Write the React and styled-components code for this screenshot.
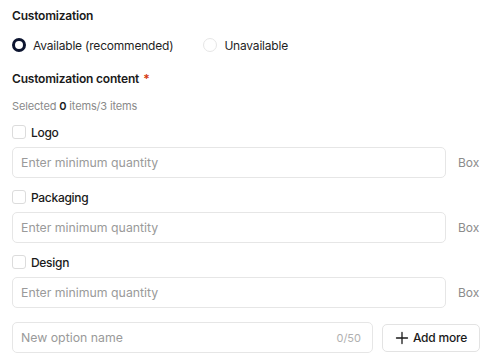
import React from "react";
import styled, { createGlobalStyle } from "styled-components";

const Global = createGlobalStyle`
  html, body { margin: 0; padding: 0; background: #fff; }
  body { font-family: Inter, "Noto Sans", sans-serif; color: #1f1f1f; -webkit-font-smoothing: antialiased; }
  * { box-sizing: border-box; }
`;

const Page = styled.div`
  padding: 7px 20px 0 12px;
  width: 500px;
  display: flex;
  flex-direction: column;
`;

const Title = styled.div`
  font-size: 12px;
  font-weight: 600;
  letter-spacing: -0.2px;
  line-height: 18px;
  color: #1a1a1a;
  margin-top: ${(p) => p.$mt || 0}px;
`;

const Star = styled.span`
  color: #d4380d;
  margin-left: 4px;
`;

const RadioRow = styled.div`
  display: flex;
  align-items: center;
  gap: 30px;
  margin-top: 11px;
  height: 18px;
`;

const RadioItem = styled.label`
  display: flex;
  align-items: center;
  gap: 7px;
  font-size: 12px;
  letter-spacing: -0.2px;
  color: #1f1f1f;
`;

const RadioDot = styled.span`
  width: 14px;
  height: 14px;
  border-radius: 50%;
  border: ${(p) => (p.$on ? "3.5px solid #0d1530" : "1px solid #e6e6e6")};
  background: #fff;
`;

const Meta = styled.div`
  margin-top: 10px;
  font-size: 11px;
  letter-spacing: -0.15px;
  line-height: 16px;
  color: #8a8a8a;
  b { color: #1a1a1a; font-weight: 600; }
`;

const CheckRow = styled.label`
  display: flex;
  align-items: center;
  gap: 6px;
  height: 16px;
  margin-top: ${(p) => p.$mt}px;
  font-size: 12px;
  font-weight: 500;
  letter-spacing: -0.3px;
  color: #1a1a1a;
`;

const Box = styled.span`
  width: 14px;
  height: 14px;
  border: 1px solid #dcdcdc;
  border-radius: 3px;
  background: #fff;
  margin-right: -1px;
`;

const FieldRow = styled.div`
  display: flex;
  align-items: center;
  gap: 12px;
  margin-top: 7px;
`;

const Field = styled.div`
  flex: 1;
  height: 31px;
  border: 1px solid #e6e6e6;
  border-radius: 5px;
  display: flex;
  align-items: center;
  justify-content: space-between;
  padding: 0 8px;
  font-size: 12.3px;
  color: #9a9a9a;
`;

const Unit = styled.span`
  font-size: 12px;
  color: #8c8c8c;
  width: 22px;
`;

const Counter = styled.span`
  font-size: 11px;
  color: #b0b0b0;
  margin-right: 3px;
`;

const BottomRow = styled.div`
  display: flex;
  align-items: center;
  gap: 9px;
  margin-top: 14px;
`;

const AddButton = styled.button`
  width: 98px;
  height: 28px;
  border: 1px solid #e3e3e3;
  border-radius: 5px;
  background: #fff;
  display: flex;
  align-items: center;
  justify-content: center;
  gap: 4px;
  font-family: inherit;
  font-size: 12px;
  font-weight: 500;
  letter-spacing: -0.2px;
  color: #1a1a1a;
  padding: 0;
`;

const items = ["Logo", "Packaging", "Design"];

export default function App() {
  return (
    <>
      <Global />
      <Page>
        <Title>Customization</Title>
        <RadioRow>
          <RadioItem>
            <RadioDot $on />
            Available (recommended)
          </RadioItem>
          <RadioItem>
            <RadioDot />
            Unavailable
          </RadioItem>
        </RadioRow>
        <Title $mt={16}>
          Customization content<Star>*</Star>
        </Title>
        <Meta>
          Selected <b>0</b> items/3 items
        </Meta>
        {items.map((name, i) => (
          <React.Fragment key={name}>
            <CheckRow $mt={i === 0 ? 10 : 11}>
              <Box />
              {name}
            </CheckRow>
            <FieldRow>
              <Field>Enter minimum quantity</Field>
              <Unit>Box</Unit>
            </FieldRow>
          </React.Fragment>
        ))}
        <BottomRow>
          <Field>
            New option name
            <Counter>0/50</Counter>
          </Field>
          <AddButton>
            <svg width="14" height="14" viewBox="0 0 14 14" fill="none" stroke="#1a1a1a" strokeWidth="1.3" strokeLinecap="round">
              <path d="M7 1.5v11M1.5 7h11" />
            </svg>
            Add more
          </AddButton>
        </BottomRow>
      </Page>
    </>
  );
}
